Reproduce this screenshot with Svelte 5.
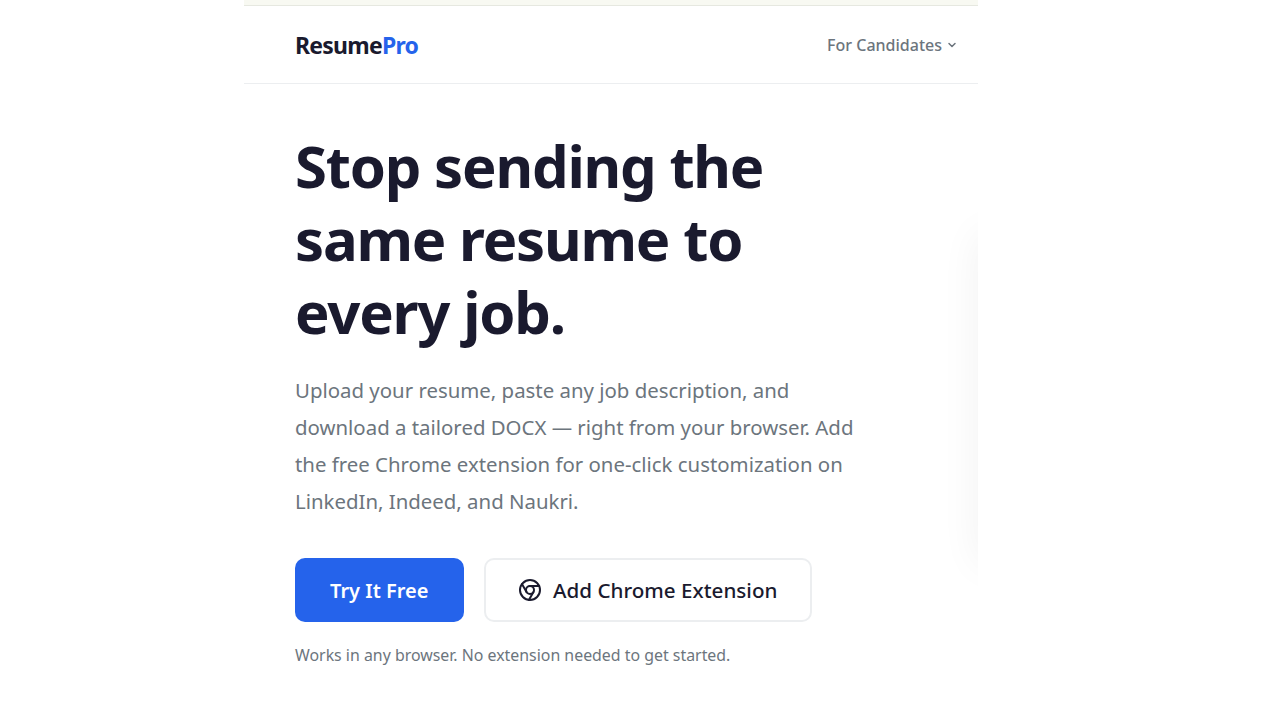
<script>
  const title = ['Stop sending the', 'same resume to', 'every job.'];
</script>

<div class="page">
  <div class="strip"></div>
  <header class="nav">
    <div class="logo">Resume<span>Pro</span></div>
    <button class="menu">
      For Candidates
      <svg width="10" height="10" viewBox="0 0 10 10" fill="none" stroke="currentColor" stroke-width="1.5" stroke-linecap="round" stroke-linejoin="round"><path d="M2 3.5 5 6.5 8 3.5"/></svg>
    </button>
  </header>
  <main class="hero">
    <h1>{#each title as line}<span>{line}</span>{/each}</h1>
    <p class="lead">
      <span>Upload your resume, paste any job description, and</span>
      <span>download a tailored DOCX — right from your browser. Add</span>
      <span>the free Chrome extension for one-click customization on</span>
      <span>LinkedIn, Indeed, and Naukri.</span>
    </p>
    <div class="actions">
      <button class="primary">Try It Free</button>
      <button class="secondary">
        <svg width="24" height="24" viewBox="0 0 24 24" fill="none" stroke="currentColor" stroke-width="2" stroke-linecap="round" stroke-linejoin="round">
          <circle cx="12" cy="12" r="10"/>
          <circle cx="12" cy="12" r="4"/>
          <path d="M21.17 8H12"/>
          <path d="M3.95 6.06 8.54 14"/>
          <path d="M10.88 21.94 15.46 14"/>
        </svg>
        Add Chrome Extension
      </button>
    </div>
    <p class="note">Works in any browser. No extension needed to get started.</p>
    <div class="glow"></div>
  </main>
</div>

<style>
  :global(body) {
    margin: 0;
    background: #fff;
    font-family: "Noto Sans", "Open Sans", sans-serif;
  }
  .page {
    width: 734px;
    height: 720px;
    margin-left: 244px;
    overflow: hidden;
  }
  .strip {
    height: 5px;
    background: #f8f9f2;
    border-bottom: 1px solid #e6e8e0;
  }
  .nav {
    height: 78px;
    box-sizing: border-box;
    padding: 1px 21px 0 51px;
    display: flex;
    align-items: center;
    justify-content: space-between;
    border-bottom: 1px solid #eceef0;
  }
  .logo {
    font-size: 23px;
    font-weight: 700;
    color: #1a1a2e;
    letter-spacing: -0.75px;
  }
  .logo span { color: #2563eb; }
  .menu {
    display: flex;
    align-items: center;
    gap: 5px;
    padding: 0;
    border: 0;
    background: none;
    font: 500 16px "Noto Sans", sans-serif;
    color: #6c757d;
  }
  .hero {
    position: relative;
    height: 636px;
    padding: 45px 0 0 51px;
    box-sizing: border-box;
    overflow: hidden;
  }
  h1 {
    margin: 0;
    font-size: 58px;
    line-height: 73px;
    font-weight: 700;
    color: #1a1a2e;
    letter-spacing: -1.2px;
  }
  h1 span, .lead span { display: block; white-space: nowrap; }
  .lead {
    margin: 24px 0 0;
    font-size: 20.4px;
    line-height: 37px;
    color: #6c757d;
  }
  .actions {
    display: flex;
    gap: 20px;
    margin-top: 38px;
  }
  .primary, .secondary {
    height: 64px;
    box-sizing: border-box;
    border-radius: 10px;
    padding-top: 1px;
    font: 500 20.6px "Noto Sans", sans-serif;
    display: flex;
    align-items: center;
    justify-content: center;
  }
  .primary {
    width: 168.5px;
    border: 0;
    background: #2563eb;
    color: #fff;
    font-weight: 600;
    font-size: 20px;
  }
  .secondary {
    width: 328.5px;
    gap: 11px;
    background: #fff;
    color: #1a1a2e;
    border: 2px solid #eceef0;
  }
  .note {
    margin: 22px 0 0;
    font-size: 15.9px;
    color: #6c757d;
  }
  .glow {
    position: absolute;
    left: 734px;
    top: 150px;
    width: 40px;
    height: 330px;
    box-shadow: 0 0 40px rgba(0, 0, 0, 0.06);
  }
</style>
